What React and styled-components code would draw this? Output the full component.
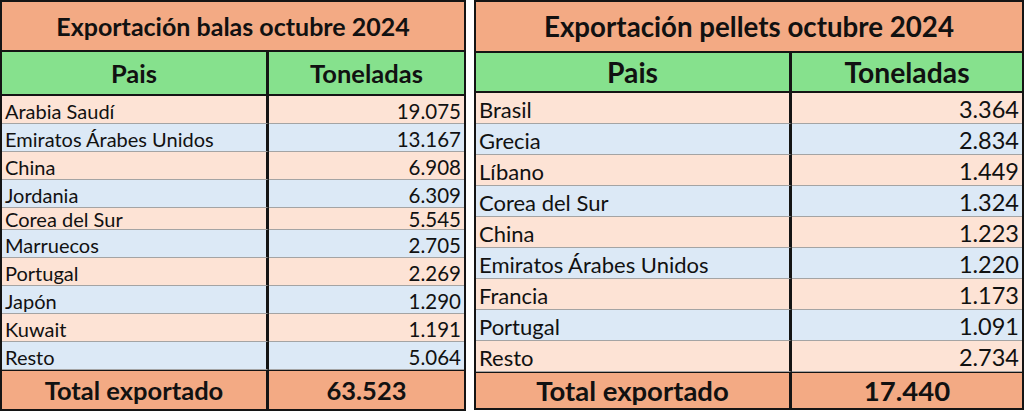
import React from "react";
import styled, { createGlobalStyle } from "styled-components";

const GlobalStyle = createGlobalStyle`
  html, body {
    margin: 0;
    padding: 0;
    background: #ffffff;
  }
  body {
    font-family: "Lato", "Liberation Sans", sans-serif;
    color: #111;
  }
`;

const ORANGE = "#f3aa84";
const GREEN = "#86e18d";
const PEACH = "#fde3d5";
const BLUE = "#dce9f6";

const balas = [
  ["Arabia Saudí", "19.075"],
  ["Emiratos Árabes Unidos", "13.167"],
  ["China", "6.908"],
  ["Jordania", "6.309"],
  ["Corea del Sur", "5.545", 22],
  ["Marruecos", "2.705"],
  ["Portugal", "2.269"],
  ["Japón", "1.290"],
  ["Kuwait", "1.191"],
  ["Resto", "5.064"],
];

const pellets = [
  ["Brasil", "3.364"],
  ["Grecia", "2.834"],
  ["Líbano", "1.449"],
  ["Corea del Sur", "1.324"],
  ["China", "1.223"],
  ["Emiratos Árabes Unidos", "1.220"],
  ["Francia", "1.173"],
  ["Portugal", "1.091"],
  ["Resto", "2.734"],
];

const Page = styled.div`
  display: flex;
  align-items: flex-start;
  gap: 8px;
  width: 1024px;
  height: 411px;
  overflow: hidden;
`;

const Sheet = styled.div`
  width: ${(p) => p.$width}px;
  height: ${(p) => p.$height}px;
  box-sizing: border-box;
  border: 2px solid #141414;
  display: flex;
  flex-direction: column;
`;

const Title = styled.div`
  height: ${(p) => p.$h}px;
  flex: none;
  background: ${ORANGE};
  border-bottom: 2px solid #141414;
  display: flex;
  align-items: center;
  justify-content: center;
  font-weight: 700;
  font-size: ${(p) => p.$size}px;
`;

const Grid = styled.div`
  flex: 1;
  display: grid;
  grid-template-columns: ${(p) => p.$left}px 1fr;
`;

const HeadCell = styled.div`
  height: ${(p) => p.$h}px;
  background: ${GREEN};
  border-bottom: 2px solid #141414;
  border-right: ${(p) => (p.$first ? "3px solid #141414" : "none")};
  display: flex;
  align-items: center;
  justify-content: center;
  font-weight: 700;
  font-size: ${(p) => p.$size}px;
`;

const Cell = styled.div`
  box-sizing: border-box;
  height: ${(p) => p.$h}px;
  background: ${(p) => (p.$alt ? BLUE : PEACH)};
  border-bottom: 1px solid #a4a4a4;
  border-right: ${(p) => (p.$first ? "3px solid #141414" : "none")};
  display: flex;
  align-items: flex-end;
  justify-content: ${(p) => (p.$first ? "flex-start" : "flex-end")};
  padding: 0 3px ${(p) => (p.$tight ? 0 : 2)}px;
  font-size: ${(p) => p.$size}px;
  line-height: 1;
  overflow: hidden;
  white-space: nowrap;
`;

const TotalCell = styled.div`
  box-sizing: border-box;
  background: ${ORANGE};
  border-top: 1px solid #141414;
  border-right: ${(p) => (p.$first ? "3px solid #141414" : "none")};
  display: flex;
  align-items: center;
  justify-content: center;
  font-weight: 700;
  font-size: ${(p) => p.$size}px;
`;

const ExportTable = ({ title, rows, dims }) => (
  <Sheet $width={dims.width} $height={dims.height}>
    <Title $h={dims.title} $size={dims.titleSize}>
      {title}
    </Title>
    <Grid $left={dims.left} style={{ gridTemplateRows: `auto repeat(${rows.length}, auto) 1fr` }}>
      <HeadCell $first $h={dims.head} $size={dims.headSize}>
        Pais
      </HeadCell>
      <HeadCell $h={dims.head} $size={dims.headSize}>
        Toneladas
      </HeadCell>
      {rows.map(([name, value, h], i) => (
        <React.Fragment key={name}>
          <Cell $first $tight={!!h} $alt={i % 2 === 1} $h={h || dims.row} $size={dims.rowSize}>
            {name}
          </Cell>
          <Cell $tight={!!h} $alt={i % 2 === 1} $h={h || dims.row} $size={dims.numSize}>
            {value}
          </Cell>
        </React.Fragment>
      ))}
      <TotalCell $first $size={dims.totalSize}>
        Total exportado
      </TotalCell>
      <TotalCell $size={dims.totalSize}>{dims.total}</TotalCell>
    </Grid>
  </Sheet>
);

const App = () => (
  <>
    <GlobalStyle />
    <Page>
      <ExportTable
        title="Exportación balas octubre 2024"
        rows={balas}
        dims={{
          width: 466,
          height: 411,
          title: 48,
          titleSize: 25,
          left: 267,
          head: 42,
          headSize: 25.5,
          row: 28,
          rowSize: 20,
          numSize: 20.5,
          totalSize: 25.5,
          total: "63.523",
        }}
      />
      <ExportTable
        title="Exportación pellets octubre 2024"
        rows={pellets}
        dims={{
          width: 550,
          height: 410,
          title: 49,
          titleSize: 27.7,
          left: 316,
          head: 38,
          headSize: 28.3,
          row: 31,
          rowSize: 22,
          numSize: 23.5,
          totalSize: 27.5,
          total: "17.440",
        }}
      />
    </Page>
  </>
);

export default App;
